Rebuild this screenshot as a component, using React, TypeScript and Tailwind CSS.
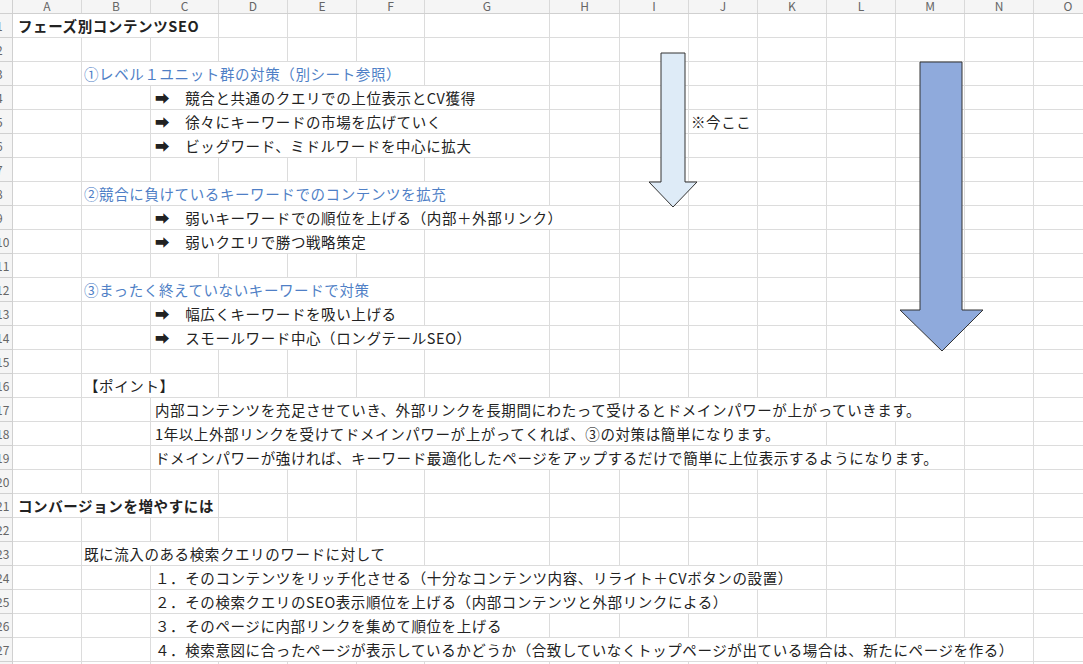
import React from "react";

const cols = [
  ["A", 69], ["B", 69], ["C", 68], ["D", 69], ["E", 69], ["F", 68], ["G", 125],
  ["H", 70], ["I", 69], ["J", 69], ["K", 69], ["L", 69], ["M", 69], ["N", 69], ["O", 69],
] as [string, number][];

type T = { col: number; text: string; cls?: string };
const rows: Record<number, T[]> = {
  1: [{ col: 0, text: "フェーズ別コンテンツSEO", cls: "font-bold pl-[5px]" }],
  3: [{ col: 1, text: "①レベル１ユニット群の対策（別シート参照）", cls: "text-[#4f7fc6] pl-[2px]" }],
  4: [{ col: 2, text: "➡\u2003競合と共通のクエリでの上位表示とCV獲得", cls: "pl-[4px]" }],
  5: [{ col: 2, text: "➡\u2003徐々にキーワードの市場を広げていく", cls: "pl-[4px]" }, { col: 9, text: "※今ここ", cls: "pl-[2px]" }],
  6: [{ col: 2, text: "➡\u2003ビッグワード、ミドルワードを中心に拡大", cls: "pl-[4px]" }],
  8: [{ col: 1, text: "②競合に負けているキーワードでのコンテンツを拡充", cls: "text-[#4f7fc6] pl-[2px]" }],
  9: [{ col: 2, text: "➡\u2003弱いキーワードでの順位を上げる（内部＋外部リンク）", cls: "pl-[4px]" }],
  10: [{ col: 2, text: "➡\u2003弱いクエリで勝つ戦略策定", cls: "pl-[4px]" }],
  12: [{ col: 1, text: "③まったく終えていないキーワードで対策", cls: "text-[#4f7fc6] pl-[2px]" }],
  13: [{ col: 2, text: "➡\u2003幅広くキーワードを吸い上げる", cls: "pl-[4px]" }],
  14: [{ col: 2, text: "➡\u2003スモールワード中心（ロングテールSEO）", cls: "pl-[4px]" }],
  16: [{ col: 1, text: "【ポイント】", cls: "pl-[2px]" }],
  17: [{ col: 2, text: "内部コンテンツを充足させていき、外部リンクを長期間にわたって受けるとドメインパワーが上がっていきます。", cls: "pl-[4px]" }],
  18: [{ col: 2, text: "1年以上外部リンクを受けてドメインパワーが上がってくれば、③の対策は簡単になります。", cls: "pl-[4px]" }],
  19: [{ col: 2, text: "ドメインパワーが強ければ、キーワード最適化したページをアップするだけで簡単に上位表示するようになります。", cls: "pl-[4px]" }],
  21: [{ col: 0, text: "コンバージョンを増やすには", cls: "font-bold pl-[5px]" }],
  23: [{ col: 1, text: "既に流入のある検索クエリのワードに対して", cls: "pl-[2px]" }],
  24: [{ col: 2, text: "１．そのコンテンツをリッチ化させる（十分なコンテンツ内容、リライト＋CVボタンの設置）", cls: "pl-[4px]" }],
  25: [{ col: 2, text: "２．その検索クエリのSEO表示順位を上げる（内部コンテンツと外部リンクによる）", cls: "pl-[4px]" }],
  26: [{ col: 2, text: "３．そのページに内部リンクを集めて順位を上げる", cls: "pl-[4px]" }],
  27: [{ col: 2, text: "４．検索意図に合ったページが表示しているかどうか（合致していなくトップページが出ている場合は、新たにページを作る）", cls: "pl-[4px]" }],
};

export default function App() {
  const font = { fontFamily: '"Noto Sans CJK JP", "Noto Sans", sans-serif' };
  return (
    <div className="relative w-[1083px] h-[664px] overflow-hidden bg-white text-[14.5px] text-[#222]" style={font}>
      <div className="flex h-[14px] bg-[#f5f5f5] border-b border-[#d0d0d0]">
        <div className="w-[13px] shrink-0 border-r border-[#d0d0d0]" />
        {cols.map(([n, w]) => (
          <div key={n} style={{ width: w }} className="shrink-0 border-r border-[#d9d9d9] text-[12px] leading-[12px] text-[#666] text-center overflow-hidden">{n}</div>
        ))}
      </div>
      {Array.from({ length: 28 }, (_, i) => i + 1).map((r) => (
        <div key={r} className="flex h-[24px]">
          <div className="w-[13px] shrink-0 bg-[#f5f5f5] border-r border-b border-[#d0d0d0] text-[12px] text-[#666] leading-[23px] overflow-hidden">
            <span className="ml-[-4px]">{r}</span>
          </div>
          {cols.map(([n, w], ci) => {
            const t = rows[r]?.find((x) => x.col === ci);
            return (
              <div key={n} style={{ width: w }} className="shrink-0 border-r border-b border-[#dcdcdc] relative">
                {t && (
                  <span className={"absolute left-0 top-0 h-[23px] z-10 bg-white whitespace-nowrap leading-[23px] tracking-[0.6px] " + (t.cls ?? "")}>{t.text}</span>
                )}
              </div>
            );
          })}
        </div>
      ))}
      <svg className="absolute left-0 top-0 z-20 pointer-events-none" width="1083" height="664">
        <polygon points="661,53 685,53 685,182 697,182 673,207 649,182 661,182" fill="#deebf7" stroke="#333" strokeWidth="1" />
        <polygon points="920,62 962,62 962,310 983,310 942,351 900,310 920,310" fill="#8faadc" stroke="#333" strokeWidth="1" />
      </svg>
    </div>
  );
}
